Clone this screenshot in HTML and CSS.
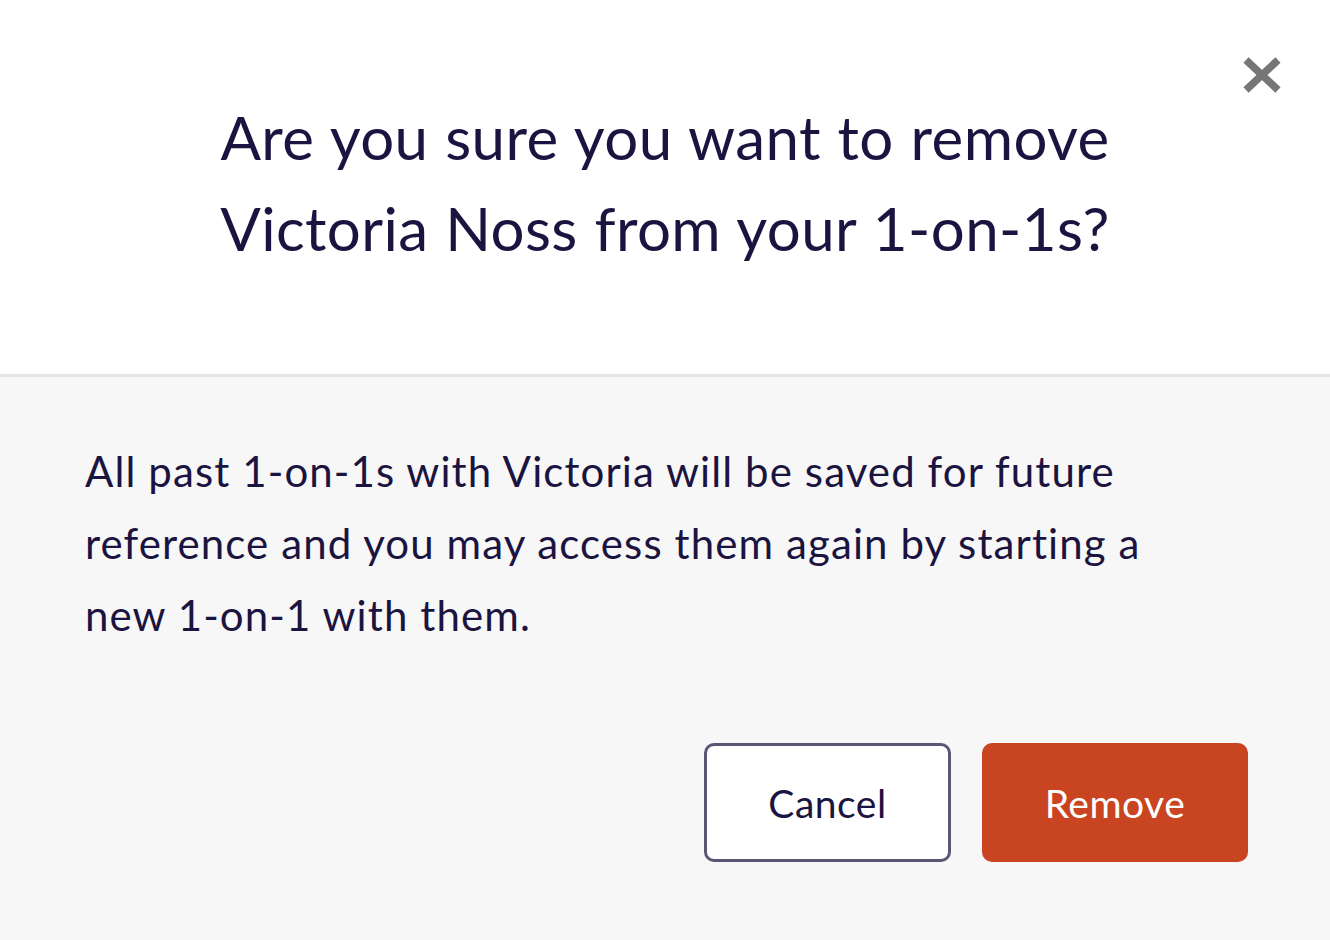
FILE: index.html
```html
<!DOCTYPE html>
<html lang="en">
<head>
<meta charset="utf-8">
<title>Remove 1-on-1</title>
<link rel="stylesheet" href="styles.css">
</head>
<body>
<div class="modal">
  <header class="modal-head">
    <button class="close" aria-label="Close">
      <svg width="40" height="38" viewBox="0 0 40 38"><path d="M4 4 L36 34 M36 4 L4 34" stroke="#767676" stroke-width="7.5" stroke-linecap="butt"/></svg>
    </button>
    <h1 class="title">Are you sure you want to remove<br>Victoria Noss from your 1-on-1s?</h1>
  </header>
  <section class="modal-body">
    <p class="message">All past 1-on-1s with Victoria will be saved for future reference and you may access them again by starting a new 1-on-1 with them.</p>
    <div class="actions">
      <button class="btn btn-cancel">Cancel</button>
      <button class="btn btn-remove">Remove</button>
    </div>
  </section>
</div>
</body>
</html>
```
FILE: styles.css
```css
html, body {
  margin: 0;
  padding: 0;
  height: 100%;
}
body {
  font-family: "Lato", "Noto Sans", sans-serif;
  color: #1b1440;
  background: #f7f7f7;
}
.modal {
  display: flex;
  flex-direction: column;
  min-height: 100%;
}
.modal-head {
  position: relative;
  background: #ffffff;
  height: 377px;
  box-sizing: border-box;
  border-bottom: 3px solid #e5e5e5;
  display: flex;
  justify-content: center;
  padding-top: 92px;
}
.close {
  position: absolute;
  top: 56px;
  right: 48px;
  border: 0;
  background: none;
  padding: 0;
  cursor: pointer;
}
.close svg { display: block; }
.title {
  margin: 0;
  font-weight: 400;
  font-size: 60px;
  letter-spacing: 0.4px;
  word-spacing: 1px;
  line-height: 91px;
  text-align: center;
}
.modal-body {
  flex: 1;
  background: #f7f7f7;
  padding: 58px 82px 0 85px;
}
.message {
  margin: 0;
  max-width: 1100px;
  font-size: 42px;
  letter-spacing: 1.1px;
  line-height: 72px;
}
.actions {
  display: flex;
  justify-content: flex-end;
  gap: 31px;
  margin-top: 92px;
}
.btn {
  font-family: inherit;
  font-size: 39px;
  letter-spacing: 0.5px;
  height: 119px;
  border-radius: 10px;
  cursor: pointer;
}
.btn-cancel {
  width: 247px;
  background: #ffffff;
  color: #1b1440;
  border: 3px solid #5b5676;
}
.btn-remove {
  width: 266px;
  background: #c94421;
  color: #ffffff;
  border: 0;
}
```
